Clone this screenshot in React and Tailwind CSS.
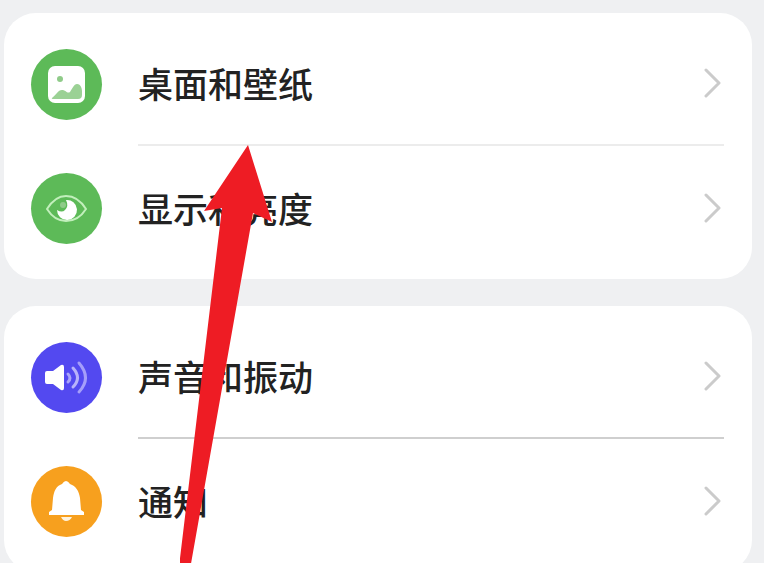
import React from 'react';

const ImageIcon = () => (
	<svg viewBox="0 0 71 71" className="w-full h-full" aria-hidden="true">
		<rect x="17" y="17" width="37" height="37" rx="7" fill="#fff" />
		<circle cx="29" cy="30" r="3" fill="#8fcb89" />
		<path d="M21 49 C25 46 27 41 31 41 C35 41 36 45 39 43 C41 40 43 35 46 35 C50 35 51 40 51 42 V46 Q51 50 47 50 H23 Q20 50 21 49 Z" fill="#9bd195" />
	</svg>
);

const EyeIcon = () => (
	<svg viewBox="0 0 71 71" className="w-full h-full" aria-hidden="true">
		<path d="M16 36 C21 28 28 23 35 23 C43 23 50 28 55 36 C50 44 43 48 35 48 C28 48 21 44 16 36 Z" fill="none" stroke="#c2efbc" strokeWidth="2" strokeLinejoin="round" />
		<path d="M35 27 A10 10 0 1 1 26 37 Q31 40 34 37 Q38 33 35 27 Z" fill="#fff" />
		<circle cx="32" cy="32" r="3" fill="#8fcb89" />
	</svg>
);

const SoundIcon = () => (
	<svg viewBox="0 0 71 71" className="w-full h-full" aria-hidden="true">
		<path d="M16 29 H22 L30 23 Q33 22 33 25 V46 Q33 49 30 48 L22 42 H16 Q14 42 14 40 V31 Q14 29 16 29 Z" fill="#fff" />
		<g fill="none" strokeLinecap="round" strokeWidth="3">
			<path d="M37 32 Q41 36 37 40" stroke="#aaa4f9" />
			<path d="M42 26 Q51 36 42 45" stroke="#b8b2fa" />
			<path d="M48 21 Q61 36 48 50" stroke="#a59efa" />
		</g>
	</svg>
);

const BellIcon = () => (
	<svg viewBox="0 0 71 71" className="w-full h-full" aria-hidden="true">
		<path d="M35 15 Q37 15 39 18 C45 20 48 25 49 32 L50 44 L53 46 V49 H18 V46 L21 44 L22 32 C23 25 25 20 31 18 Q33 15 35 15 Z" fill="#fff" />
		<path d="M30 51 H41 Q39 55 35 55 Q32 55 30 51 Z" fill="#fff3dd" />
	</svg>
);

const groups = [
	{
		id: 'display',
		divider: 'border-[#ececec]',
		items: [
			{ label: '桌面和壁纸', icon: ImageIcon, color: 'bg-[#5dba58]' },
			{ label: '显示和亮度', icon: EyeIcon, color: 'bg-[#5dba58]' },
		],
	},
	{
		id: 'alerts',
		divider: 'border-[#cfcfcf]',
		items: [
			{ label: '声音和振动', icon: SoundIcon, color: 'bg-[#5349f0]' },
			{ label: '通知', icon: BellIcon, color: 'bg-[#f7a01e]' },
		],
	},
];

const SettingRow = ({ item, border }) => {
	const Icon = item.icon;
	return (
		<li>
			<a href="#" className="flex items-center h-[124px] pl-[27px] pr-7">
				<span className={`w-[71px] h-[71px] shrink-0 rounded-full ${item.color}`}>
					<Icon />
				</span>
				<span className={`flex flex-1 items-center justify-between self-stretch ml-9 ${border}`}>
					<span className="text-[35px] leading-[48px] font-medium text-[#222]">{item.label}</span>
					<svg viewBox="0 0 20 32" className="w-5 h-8 shrink-0" aria-hidden="true">
						<path d="M2 3 L15 16 L2 29" fill="none" stroke="#cbcbcb" strokeWidth="3" strokeLinecap="round" strokeLinejoin="round" />
					</svg>
				</span>
			</a>
		</li>
	);
};

const App = () => {
	return (
		<div className="relative h-screen overflow-hidden bg-[#eff0f2] pt-[13px] pl-1 pr-3 font-['Noto_Sans_CJK_SC',sans-serif]">
			<main className="flex flex-col gap-[27px]">
				{groups.map((group) => (
					<ul key={group.id} className="bg-white rounded-[32px] py-[9px]">
						{group.items.map((item, index) => (
							<SettingRow
								key={item.label}
								item={item}
								border={index < group.items.length - 1 ? `border-b-2 ${group.divider}` : ''}
							/>
						))}
					</ul>
				))}
			</main>
			{/* pointer to the first row */}
			<svg viewBox="0 0 92 430" className="absolute left-[180px] top-[145px] w-[92px] h-[430px] pointer-events-none" aria-hidden="true">
				<path d="M68 0 L92 77 L73 68 L9 430 L-2 430 L42 63 L24 66 Z" fill="#ee1c24" />
			</svg>
		</div>
	);
};

export default App;
